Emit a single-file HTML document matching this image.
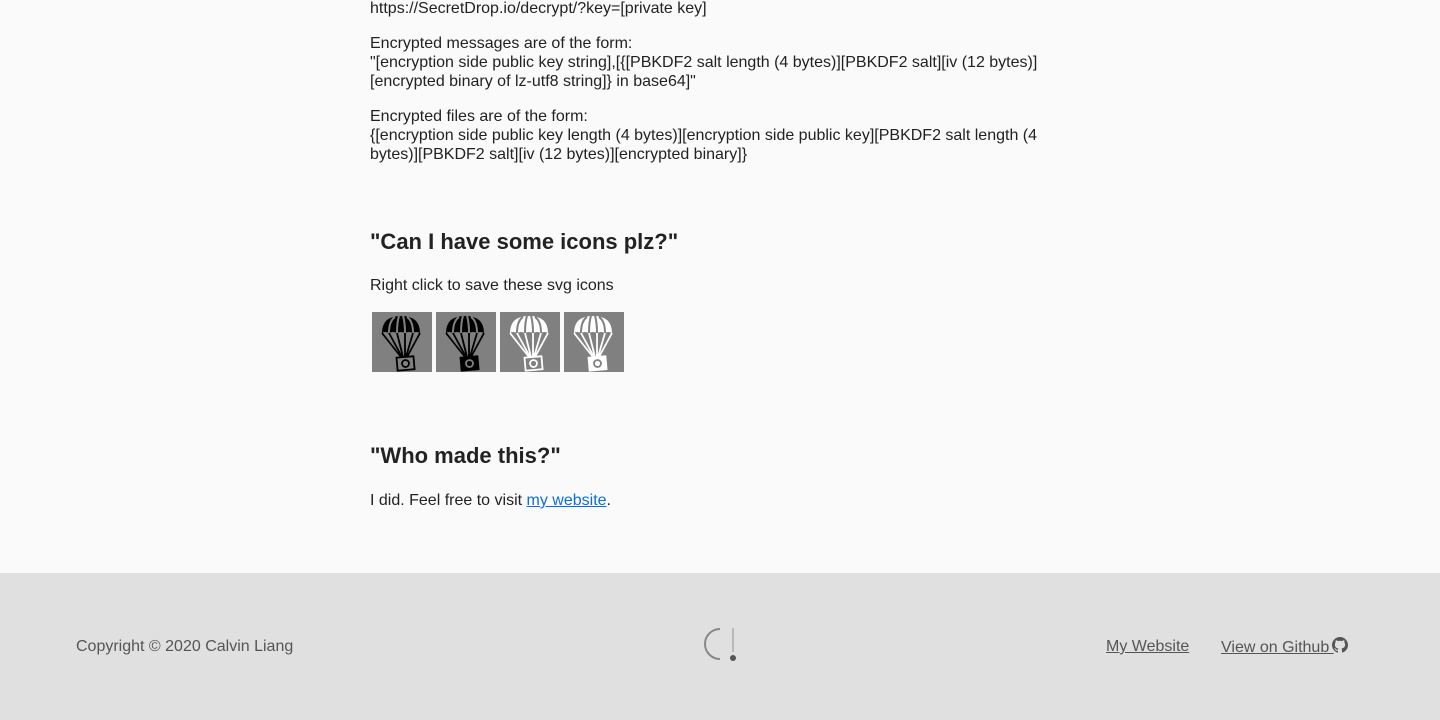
<!DOCTYPE html>
<html><head><meta charset="utf-8"><style>
body{margin:0;background:#fafafa;font-family:"Liberation Sans",sans-serif;color:#222;width:1440px;height:720px;overflow:hidden;position:relative}
.c{position:absolute;left:370px;width:680px;font-size:16px;line-height:19px}
p{margin:0}
h2{margin:0;font-size:22px;font-weight:bold;position:absolute;left:370px}
a{color:#0a6fd6}
footer{position:absolute;left:0;top:573px;width:1440px;height:147px;background:#e0e0e0;color:#555;font-size:16px}
footer a{color:#555}
.ic{position:absolute;top:312px;width:60px;height:60px;background:#808080}
</style></head><body>
<div class="c" style="top:-1px"><p>https://SecretDrop.io/decrypt/?key=[private key]</p></div>
<div class="c" style="top:34px"><p>Encrypted messages are of the form:<br>"[encryption side public key string],[{[PBKDF2 salt length (4 bytes)][PBKDF2 salt][iv (12 bytes)][encrypted binary of lz-utf8 string]} in base64]"</p></div>
<div class="c" style="top:107px"><p>Encrypted files are of the form:<br>{[encryption side public key length (4 bytes)][encryption side public key][PBKDF2 salt length (4 bytes)][PBKDF2 salt][iv (12 bytes)][encrypted binary]}</p></div>
<h2 style="top:229px">"Can I have some icons plz?"</h2>
<div class="c" style="top:276px">Right click to save these svg icons</div>
<svg width="0" height="0" style="position:absolute"><defs>
<g id="d">
<path d="M10 21 Q10 4 29 4 Q48 4 48 21 Q44 19 41 21 Q37 19 33 21 Q29 19 25 21 Q21 19 17 21 Q13 19 10 21Z"/>
</g>
<g id="g" stroke="#808080" stroke-width="2" fill="none">
<path d="M17 21 Q17 9 23 5 M41 21 Q41 9 35 5 M25 21 Q25 10 27 4 M33 21 Q33 10 31 4"/>
</g>
</defs></svg>
<div class="ic" style="left:372px"><svg width="60" height="60"><use href="#d" fill="#000"/><use href="#g"/><g stroke="#000" stroke-width="1.8" fill="none"><path d="M10 21 L29 45 M17 21 L30 45 M25 21 L31 45 M33 21 L33 45 M41 21 L34 45 M48 21 L35 45"/><rect x="25" y="45" width="17" height="13" transform="rotate(-5 33 51)"/><circle cx="33.5" cy="51.5" r="3.5"/></g></svg></div>
<div class="ic" style="left:436px"><svg width="60" height="60"><use href="#d" fill="#000"/><use href="#g"/><g stroke="#000" stroke-width="1.8" fill="none"><path d="M10 21 L29 45 M17 21 L30 45 M25 21 L31 45 M33 21 L33 45 M41 21 L34 45 M48 21 L35 45"/><rect x="25" y="45" width="17" height="13" transform="rotate(-5 33 51)" fill="#000"/><circle cx="33.5" cy="51.5" r="3.5" stroke="#808080"/></g></svg></div>
<div class="ic" style="left:500px"><svg width="60" height="60"><use href="#d" fill="#fff"/><use href="#g"/><g stroke="#fff" stroke-width="1.8" fill="none"><path d="M10 21 L29 45 M17 21 L30 45 M25 21 L31 45 M33 21 L33 45 M41 21 L34 45 M48 21 L35 45"/><rect x="25" y="45" width="17" height="13" transform="rotate(-5 33 51)"/><circle cx="33.5" cy="51.5" r="3.5"/></g></svg></div>
<div class="ic" style="left:564px"><svg width="60" height="60"><use href="#d" fill="#fff"/><use href="#g"/><g stroke="#fff" stroke-width="1.8" fill="none"><path d="M10 21 L29 45 M17 21 L30 45 M25 21 L31 45 M33 21 L33 45 M41 21 L34 45 M48 21 L35 45"/><rect x="25" y="45" width="17" height="13" transform="rotate(-5 33 51)" fill="#fff"/><circle cx="33.5" cy="51.5" r="3.5" stroke="#808080"/></g></svg></div>
<h2 style="top:443px">"Who made this?"</h2>
<div class="c" style="top:491px">I did. Feel free to visit <a href="#">my website</a>.</div>
<footer>
<div style="position:absolute;left:76px;top:65px">Copyright © 2020 Calvin Liang</div>
<svg style="position:absolute;left:700px;top:52px" width="40" height="40"><path d="M20 4 A15 15 0 0 0 20 34" stroke="#888" stroke-width="2" fill="none"/><line x1="33" y1="3" x2="33" y2="27" stroke="#aaa" stroke-width="1.5"/><circle cx="33" cy="33" r="3" fill="#555"/></svg>
<a href="#" style="position:absolute;left:1106px;top:65px">My Website</a>
<a href="#" style="position:absolute;left:1221px;top:66px">View on Github&nbsp;</a>
<svg style="position:absolute;left:1332px;top:64px" width="16" height="16" viewBox="0 0 16 16"><path fill="#555" d="M8 0C3.6 0 0 3.6 0 8c0 3.5 2.3 6.5 5.5 7.6.4.1.5-.2.5-.4v-1.4c-2.2.5-2.7-1-2.7-1-.4-.9-.9-1.2-.9-1.200-.7-.5.1-.5.1-.5.8.1 1.2.8 1.2.8.7 1.2 1.900.9 2.300.7.1-.5.3-.9.5-1.100-1.800-.2-3.600-.9-3.600-4 0-.9.3-1.6.8-2.100-.1-.2-.4-1 .1-2.100 0 0 .7-.2 2.200.8.6-.2 1.300-.3 2-.3s1.400.1 2 .3c1.500-1 2.200-.8 2.200-.8.4 1.100.2 1.900.1 2.100.5.6.8 1.300.8 2.100 0 3.100-1.900 3.700-3.600 3.900.3.3.5.8.5 1.500v2.200c0 .2.1.5.6.4C13.700 14.500 16 11.500 16 8c0-4.400-3.600-8-8-8z"/></svg>
</footer>
</body></html>
